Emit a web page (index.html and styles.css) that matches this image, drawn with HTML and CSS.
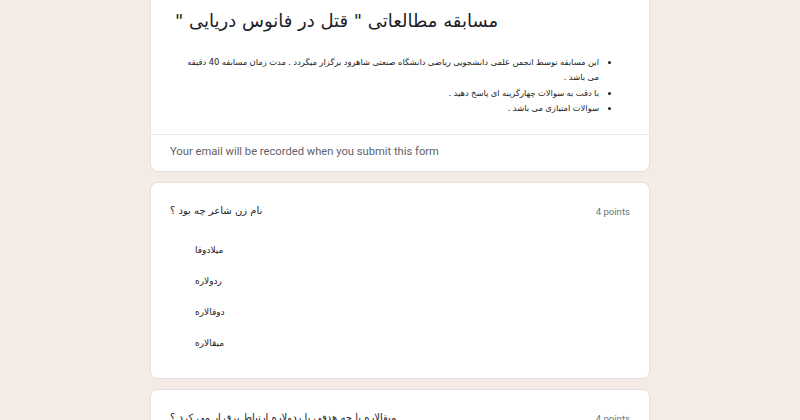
FILE: index.html
```html
<!DOCTYPE html>
<html lang="fa">
<head>
    <meta charset="UTF-8">
    <meta name="viewport" content="width=device-width, initial-scale=1.0">
    <title>مسابقه مطالعاتی</title>
    <link rel="stylesheet" href="styles.css">
</head>
<body>
    <div class="form-wrap">
        <div class="card header-card">
            <div class="header-body">
                <div class="form-title" dir="rtl">مسابقه مطالعاتی " قتل در فانوس دریایی "</div>
                <ul class="form-desc" dir="rtl">
                    <li>این مسابقه توسط انجمن علمی دانشجویی ریاضی دانشگاه صنعتی شاهرود برگزار میگردد . مدت زمان مسابقه 40 دقیقه می&nbsp;باشد&nbsp;.</li>
                    <li>با دقت به سوالات چهارگزینه ای پاسخ دهید .</li>
                    <li>سوالات امتیازی می باشد .</li>
                </ul>
            </div>
            <div class="email-note">Your email will be recorded when you submit this form</div>
        </div>

        <div class="card question">
            <div class="question-head">
                <div class="question-title" dir="rtl">نام زن شاعر چه بود ؟</div>
                <div class="points">4 points</div>
            </div>
            <div class="options">
                <div class="option" dir="rtl">میلادوفا</div>
                <div class="option" dir="rtl">ردولاره</div>
                <div class="option" dir="rtl">دوقالاره</div>
                <div class="option" dir="rtl">میقالاره</div>
            </div>
        </div>

        <div class="card question">
            <div class="question-head">
                <div class="question-title" dir="rtl">میقالاره با چه هدفی با ردولاره ارتباط برقرار می کرد ؟</div>
                <div class="points">4 points</div>
            </div>
            <div class="options">
                <div class="option" dir="rtl">برای انتقام</div>
                <div class="option" dir="rtl">برای کمک</div>
            </div>
        </div>
    </div>
</body>
</html>
```

FILE: styles.css
```css
html, body {
    margin: 0;
    padding: 0;
}

body {
    background-color: #f4ebe6;
    font-family: Roboto, "DejaVu Sans", sans-serif;
    color: #202124;
}

.form-wrap {
    width: 500px;
    margin: -12px auto 0;
    display: flex;
    flex-direction: column;
    gap: 10px;
}

.card {
    background-color: #fff;
    border: 1px solid #e8e0dc;
    border-radius: 8px;
}

.header-body {
    padding: 12px 24px 18px;
}

.form-title {
    text-align: left;
    font-family: "DejaVu Sans", sans-serif;
    font-size: 18px;
    line-height: 40px;
    color: #202124;
}

.form-desc {
    margin: 14px 0 0;
    padding: 0 26px 0 0;
    font-family: "DejaVu Sans", sans-serif;
    font-size: 8.4px;
    word-spacing: -0.3px;
    line-height: 15.3px;
    color: #202124;
}

.email-note {
    border-top: 1px solid #ece7e4;
    padding: 9px 19px 12px;
    font-size: 11.2px;
    line-height: 15px;
    color: #5f6368;
}

.question {
    padding: 19px 19px 19px;
}

.question-head {
    display: flex;
    justify-content: space-between;
    align-items: center;
}

.question-title {
    font-family: "DejaVu Sans", sans-serif;
    font-size: 10px;
    line-height: 18px;
}

.points {
    font-size: 9.6px;
    color: #70757a;
}

.options {
    margin-top: 15px;
    display: flex;
    flex-direction: column;
    align-items: flex-start;
    padding-left: 25px;
}

.option {
    font-family: "DejaVu Sans", sans-serif;
    font-size: 9px;
    line-height: 17px;
    padding: 7px 0;
}
```
